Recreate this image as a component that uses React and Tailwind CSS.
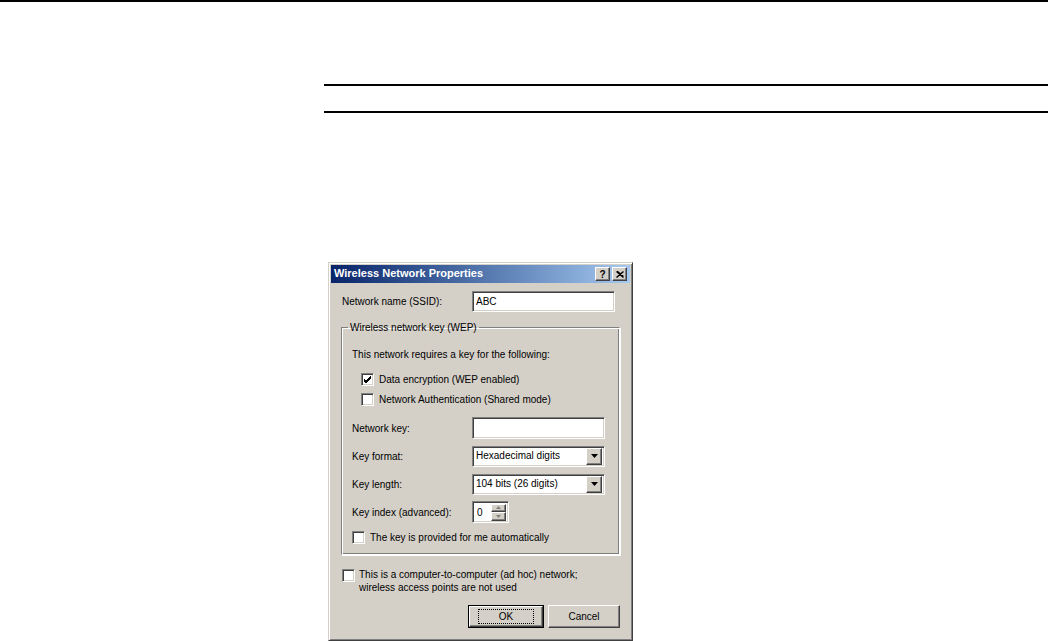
import React from 'react';

const raised = 'border border-t-white border-l-white border-r-[#404040] border-b-[#404040] shadow-[inset_-1px_-1px_#808080,inset_1px_1px_#d4d0c8] bg-[#d4d0c8]';
const sunken = 'border border-t-[#808080] border-l-[#808080] border-r-white border-b-white shadow-[inset_1px_1px_#404040,inset_-1px_-1px_#d4d0c8] bg-white';

function Check({ checked }) {
  return (
    <div className={`w-[13px] h-[13px] shrink-0 flex items-center justify-center ${sunken}`}>
      {checked && (
        <svg width="9" height="9" viewBox="0 0 9 9">
          <path d="M1 4 L3 6 L8 1 M1 5 L3 7 L8 2 M1 6 L3 8 L8 3" stroke="#000" strokeWidth="1" fill="none" />
        </svg>
      )}
    </div>
  );
}

function Select({ value }) {
  return (
    <div className={`w-[133px] h-[21px] flex items-center ${sunken} p-[2px]`}>
      <span className="flex-1 pl-[1px] leading-none">{value}</span>
      <div className={`w-[16px] h-[17px] flex items-center justify-center ${raised}`}>
        <svg width="7" height="4" viewBox="0 0 7 4">
          <path d="M0 0 H7 L3.5 4 Z" fill="#000" />
        </svg>
      </div>
    </div>
  );
}

function Row({ label, children, className = '' }) {
  return (
    <div className={`flex items-center h-[22px] ${className}`}>
      <span className="w-[120px]">{label}</span>
      {children}
    </div>
  );
}

export default function App() {
  return (
    <div className="min-h-screen bg-white text-black" style={{ fontFamily: '"Liberation Sans", Arial, sans-serif' }}>
      <div className="h-[2px] bg-black" />
      <div className="ml-[324px] mt-[82px] h-[2px] bg-black" />
      <div className="ml-[324px] mt-[25px] h-[2px] bg-black" />

      <div className="ml-[328px] mt-[149px] w-[305px] h-[379px] border border-t-[#d4d0c8] border-l-[#d4d0c8] border-r-[#404040] border-b-[#404040] shadow-[inset_1px_1px_#fff,inset_-1px_-1px_#808080] bg-[#d4d0c8] p-[1px] text-[10px] leading-[13px]">
        <div className="h-[18px] ml-[1px] mr-[1px] mt-[1px] flex items-center bg-gradient-to-r from-[#0a246a] to-[#a6caf0] pl-[3px] pr-[3px]">
          <span className="flex-1 text-white font-bold text-[11px] -mt-[2px]">Wireless Network Properties</span>
          <div className={`w-[15px] h-[14px] flex items-center justify-center font-bold text-[10px] ${raised}`}>?</div>
          <div className={`ml-[2px] w-[15px] h-[14px] flex items-center justify-center ${raised}`}>
            <svg width="8" height="7" viewBox="0 0 8 7">
              <path d="M0.5 0.5 L7.5 6.5 M7.5 0.5 L0.5 6.5 M1.5 0.5 L7.5 5.5" stroke="#000" strokeWidth="1.4" fill="none" />
            </svg>
          </div>
        </div>

        <div className="pl-[11px] pr-[11px]">
          <div className="mt-[8px] flex items-center h-[21px]">
            <span className="w-[131px] pl-[1px]">Network name (SSID):</span>
            <div className={`w-[143px] h-[21px] flex items-center pl-[3px] ${sunken}`}>ABC</div>
          </div>

          <fieldset className="mt-[9px] w-[279px] border border-t-[#808080] border-l-[#808080] border-r-white border-b-white shadow-[inset_1px_1px_#fff,inset_-1px_-1px_#808080,1px_1px_#fff] pl-[10px] pr-[10px] pb-[7px]">
            <legend className="-ml-[4px] px-[2px]">Wireless network key (WEP)</legend>
            <div className="mt-[13px] h-[14px] flex items-center">This network requires a key for the following:</div>
            <div className="mt-[8px] h-[20px] flex items-center ml-[9px] gap-[5px]">
              <Check checked />
              <span>Data encryption (WEP enabled)</span>
            </div>
            <div className="h-[20px] flex items-center ml-[9px] gap-[5px]">
              <Check />
              <span>Network Authentication (Shared mode)</span>
            </div>
            <Row label="Network key:" className="mt-[8px]">
              <div className={`w-[133px] h-[22px] ${sunken}`} />
            </Row>
            <Row label="Key format:" className="mt-[6px]">
              <Select value="Hexadecimal digits" />
            </Row>
            <Row label="Key length:" className="mt-[6px]">
              <Select value="104 bits (26 digits)" />
            </Row>
            <Row label="Key index (advanced):" className="mt-[6px]">
              <div className={`w-[37px] h-[22px] flex items-center ${sunken} p-[2px]`}>
                <span className="flex-1 pl-[2px]">0</span>
                <div className="flex flex-col w-[15px] h-[17px]">
                  <div className={`flex-1 flex items-center justify-center ${raised}`}>
                    <svg width="5" height="3" viewBox="0 0 5 3"><path d="M0 3 H5 L2.5 0 Z" fill="#808080" /></svg>
                  </div>
                  <div className={`flex-1 flex items-center justify-center ${raised}`}>
                    <svg width="5" height="3" viewBox="0 0 5 3"><path d="M0 0 H5 L2.5 3 Z" fill="#808080" /></svg>
                  </div>
                </div>
              </div>
            </Row>
            <div className="mt-[4px] h-[20px] flex items-center gap-[5px]">
              <Check />
              <span>The key is provided for me automatically</span>
            </div>
          </fieldset>

          <div className="mt-[13px] flex items-start gap-[4px] pl-[1px]">
            <div className="mt-[1px]"><Check /></div>
            <div>
              <div>This is a computer-to-computer (ad hoc) network;</div>
              <div>wireless access points are not used</div>
            </div>
          </div>

          <div className="mt-[11px] flex justify-end gap-[4px]">
            <div className="w-[76px] h-[23px] border border-black p-0">
              <div className={`w-full h-full flex items-center justify-center ${raised}`}>
                <span className="px-[20px] outline-1 outline-dotted outline-black">OK</span>
              </div>
            </div>
            <div className={`w-[72px] h-[23px] flex items-center justify-center ${raised}`}>Cancel</div>
          </div>
        </div>
      </div>
    </div>
  );
}
